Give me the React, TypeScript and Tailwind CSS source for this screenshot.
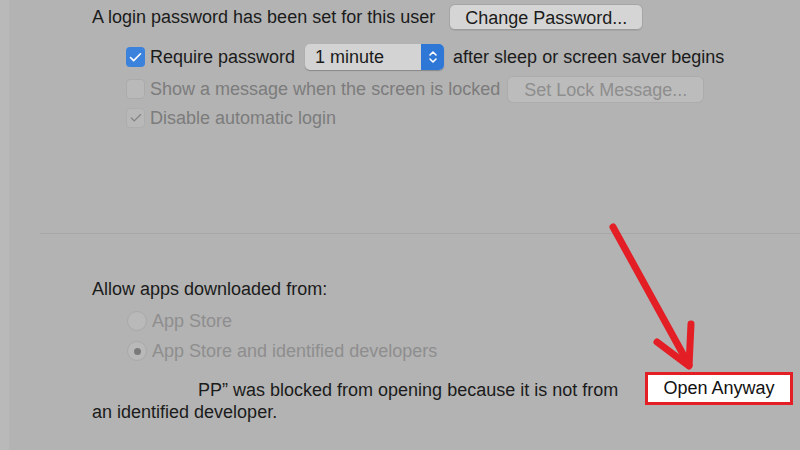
import { Check } from "lucide-react";

const font = { fontFamily: '"Liberation Sans", Arial, sans-serif' };

const Stepper = () => (
  <svg width="10" height="16" viewBox="0 0 10 16" fill="none">
    <path d="M2 6 L5 3 L8 6" stroke="white" strokeWidth="1.6" strokeLinecap="round" strokeLinejoin="round" />
    <path d="M2 10 L5 13 L8 10" stroke="white" strokeWidth="1.6" strokeLinecap="round" strokeLinejoin="round" />
  </svg>
);

const Radio = ({ on }: { on?: boolean }) => (
  <span className="flex h-[20px] w-[20px] items-center justify-center rounded-full border border-[#a8a8a8] bg-[#b9b9b9]">
    {on && <span className="h-[7px] w-[7px] rounded-full bg-[#7a7a7a]" />}
  </span>
);

export default function App() {
  return (
    <div
      className="relative flex h-[450px] w-[800px] overflow-hidden bg-[#b3b3b3] text-[18px] text-[#1b1b1b]"
      style={font}
    >
      {/* светлая полоска слева */}
      <div className="w-[9px] shrink-0 bg-[#b9b9b9]" />

      <div className="flex flex-1 flex-col">
        {/* верхний блок: пароль */}
        <div className="flex flex-col pl-[83px] pt-[4px]">
          <div className="flex h-[26px] items-center">
            <span>A login password has been set for this user</span>
            <button className="ml-[15px] h-[25px] w-[192px] rounded-[5px] border-b border-[#9c9c9c] bg-[#d5d5d5] text-[18px] text-[#1b1b1b] shadow-[0_0_0_1px_rgba(0,0,0,0.08)]">
              Change Password...
            </button>
          </div>

          <div className="mt-[14px] flex h-[26px] items-center pl-[34px]">
            <span className="flex h-[20px] w-[19px] items-center justify-center rounded-[4px] bg-[#3b82dc]">
              <Check size={15} strokeWidth={2.6} color="white" />
            </span>
            <span className="ml-[5px]">Require password</span>
            <div className="ml-[10px] flex h-[26px] w-[139px] overflow-hidden rounded-[5px] bg-[#d3d3d3] shadow-[0_1px_1px_rgba(0,0,0,0.25)]">
              <span className="flex-1 pl-[10px] leading-[26px]">1 minute</span>
              <span className="flex w-[23px] items-center justify-center bg-[#2f77d6]">
                <Stepper />
              </span>
            </div>
            <span className="ml-[9px]">after sleep or screen saver begins</span>
          </div>

          <div className="mt-[6px] flex h-[26px] items-center pl-[34px] text-[#7c7c7c]">
            <span className="h-[20px] w-[19px] rounded-[4px] border border-[#ababab] bg-[#b9b9b9]" />
            <span className="ml-[5px]">Show a message when the screen is locked</span>
            <button className="ml-[8px] h-[25px] w-[195px] rounded-[5px] bg-[#bcbcbc] text-[18px] text-[#8e8e8e] shadow-[0_0_0_1px_rgba(0,0,0,0.04)]">
              Set Lock Message...
            </button>
          </div>

          <div className="mt-[3px] flex h-[26px] items-center pl-[34px] text-[#7c7c7c]">
            <span className="flex h-[20px] w-[19px] items-center justify-center rounded-[4px] border border-[#adadad] bg-[#b8b8b8]">
              <Check size={14} strokeWidth={2} color="#808080" />
            </span>
            <span className="ml-[5px]">Disable automatic login</span>
          </div>
        </div>

        {/* разделитель */}
        <div className="ml-[31px] mt-[102px] h-px bg-[#a6a6a6]" />

        {/* нижний блок: разрешённые приложения */}
        <div className="flex flex-col pl-[83px] pt-[44px]">
          <div className="flex h-[22px] items-center">Allow apps downloaded from:</div>

          <div className="mt-[10px] flex h-[22px] items-center gap-[5px] pl-[35px] text-[#8e8e8e]">
            <Radio />
            <span>App Store</span>
          </div>
          <div className="mt-[8px] flex h-[22px] items-center gap-[5px] pl-[35px] text-[#8e8e8e]">
            <Radio on />
            <span>App Store and identified developers</span>
          </div>

          <div className="mt-[10px] flex items-start">
            <p className="w-[553px] pt-[7px] leading-[22px]">
              <span className="pl-[106px]">PP” was blocked from opening because it is not from</span>
              <br />
              an identified developer.
            </p>
            <div className="flex h-[33px] w-[148px] items-center justify-center border-[3px] border-[#e41e25] bg-white text-[18px] text-[#111]">
              Open Anyway
            </div>
          </div>
        </div>
      </div>

      {/* красная стрелка-аннотация */}
      <svg className="pointer-events-none absolute left-0 top-0" width="800" height="450">
        <g stroke="#e41e25" strokeWidth="7" strokeLinecap="round" strokeLinejoin="round" fill="none">
          <path d="M613 227 L689 365" />
          <path d="M657 342 L689 366 L691 324" />
        </g>
      </svg>
    </div>
  );
}
